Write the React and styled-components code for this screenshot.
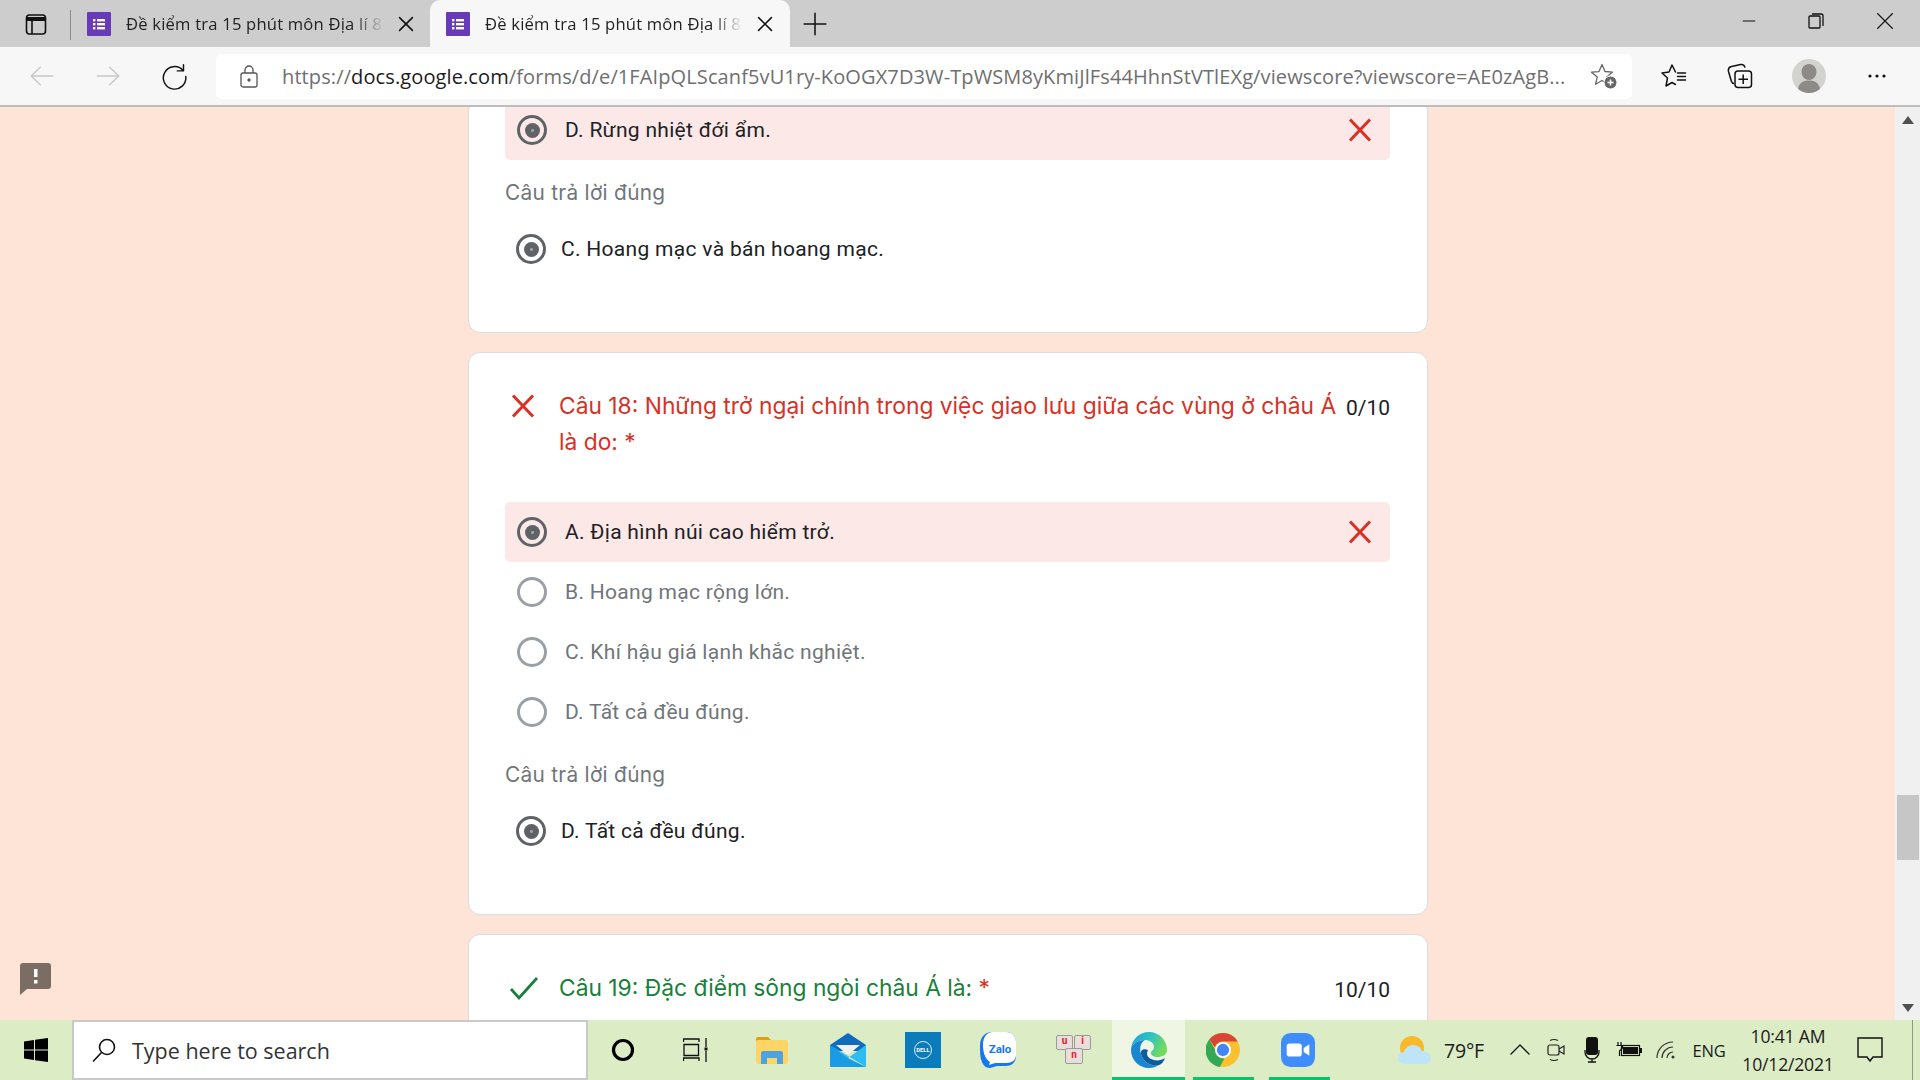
import React from 'react'
import styled, { createGlobalStyle } from 'styled-components'

const GlobalStyle = createGlobalStyle`
  html, body { margin: 0; padding: 0; width: 1920px; height: 1080px; overflow: hidden; }
  * { box-sizing: border-box; }
`

const Screen = styled.div`
  width: 1920px;
  height: 1080px;
  display: flex;
  flex-direction: column;
  font-family: 'Open Sans', 'Noto Sans', sans-serif;
  overflow: hidden;
`

/* browser chrome */
const TabStrip = styled.div`
  height: 47px;
  background: #cdcdcd;
  display: flex;
  align-items: stretch;
  flex-shrink: 0;
`
const PanelSlot = styled.div`
  width: 71px;
  display: flex;
  align-items: center;
  justify-content: center;
  position: relative;
  &::after {
    content: '';
    position: absolute;
    right: 0;
    top: 10px;
    bottom: 7px;
    width: 1px;
    background: #8c8c8c;
  }
`
const Tab = styled.div`
  width: ${(p) => (p.$active ? 360 : 359)}px;
  display: flex;
  align-items: center;
  padding-left: 16px;
  background: ${(p) => (p.$active ? '#f7f7f7' : 'transparent')};
  border-radius: 10px 10px 0 0;
  flex-shrink: 0;
`
const TabTitle = styled.div`
  width: 258px;
  margin-left: 15px;
  font-size: 16.6px;
  letter-spacing: 0.2px;
  white-space: nowrap;
  overflow: hidden;
  color: #222;
  mask-image: linear-gradient(to right, #000 88%, transparent 100%);
`
const TabClose = styled.div`
  margin-left: 11px;
  display: flex;
`
const NewTab = styled.div`
  width: 50px;
  display: flex;
  align-items: center;
  justify-content: center;
`
const WindowControls = styled.div`
  margin-left: auto;
  display: flex;
  height: 42px;
`
const WinButton = styled.div`
  width: ${(p) => p.$w}px;
  display: flex;
  align-items: center;
  justify-content: center;
`
const Toolbar = styled.div`
  height: 60px;
  background: #f7f7f7;
  border-bottom: 2px solid #bdbdbd;
  display: flex;
  align-items: center;
  padding-left: 9px;
  flex-shrink: 0;
`
const ToolSlot = styled.div`
  width: ${(p) => p.$w || 66}px;
  display: flex;
  align-items: center;
  justify-content: center;
  flex-shrink: 0;
`
const AddressBar = styled.div`
  width: 1416px;
  height: 45px;
  margin: 0 9px;
  background: #fff;
  border-radius: 6px;
  display: flex;
  align-items: center;
  padding-left: 24px;
  flex-shrink: 0;
`
const Url = styled.div`
  margin-left: 24px;
  width: 1286px;
  font-size: 20px;
  letter-spacing: 0.11px;
  color: #6f6f6f;
  white-space: nowrap;
  overflow: hidden;
  b { font-weight: 400; color: #1c1c1c; }
`
const StarAdd = styled.div`
  margin-left: 22px;
  display: flex;
`

/* page */
const Main = styled.div`
  flex: 1;
  min-height: 0;
  display: flex;
  background: #fee4d6;
  overflow: hidden;
  position: relative;
`
const Page = styled.div`
  flex: 1;
  min-width: 0;
  display: flex;
  flex-direction: column;
  align-items: center;
  gap: 19px;
  padding-left: 1px;
  overflow: hidden;
`
const Card = styled.section`
  width: 960px;
  flex-shrink: 0;
  background: #fff;
  border: 1px solid #dadce0;
  border-radius: 12px;
  padding: ${(p) => (p.$clipped ? 0 : 35)}px 37px 53px 36px;
  margin-top: ${(p) => (p.$clipped ? -8 : 0)}px;
  font-family: Roboto, sans-serif;
`
const Head = styled.div`
  display: flex;
  align-items: flex-start;
  margin-bottom: 42px;
`
const HeadIcon = styled.div`
  width: 54px;
  height: 36px;
  display: flex;
  align-items: center;
  padding-left: 3px;
  flex-shrink: 0;
`
const Title = styled.h2`
  flex: 1;
  margin: 0;
  font-family: Inter, sans-serif;
  font-weight: 400;
  font-size: 22.8px;
  line-height: 36px;
  letter-spacing: 0;
  color: ${(p) => (p.$ok ? '#188038' : '#d93025')};
  span { color: #d93025; }
`
const Score = styled.div`
  margin-left: 4px;
  font-size: 21px;
  line-height: 40px;
  color: #202124;
  white-space: nowrap;
`
const Option = styled.div`
  height: 60px;
  display: flex;
  align-items: center;
  padding: 0 12px;
  border-radius: 5px;
  background: ${(p) => (p.$wrong ? '#fce8e6' : 'transparent')};
`
const OptionText = styled.div`
  margin-left: 18px;
  flex: 1;
  font-size: 21px;
  letter-spacing: 0.3px;
  color: ${(p) => (p.$muted ? '#70757a' : '#202124')};
`
const WrongMark = styled.div`
  display: flex;
  margin-right: 3px;
`
const Ring = styled.div`
  width: 30px;
  height: 30px;
  border-radius: 50%;
  border: 3px solid ${(p) => (p.$on ? '#5f6368' : '#9aa0a6')};
  display: flex;
  align-items: center;
  justify-content: center;
  flex-shrink: 0;
  &::after {
    content: '';
    width: 15px;
    height: 15px;
    border-radius: 50%;
    background: ${(p) => (p.$on ? 'radial-gradient(#a0a4a8 1px, #5f6368 2px)' : 'transparent')};
  }
`
const AnswerLabel = styled.div`
  margin-top: 21px;
  font-family: Inter, sans-serif;
  font-size: 20.8px;
  line-height: 24px;
  letter-spacing: 0.3px;
  color: #70757a;
`
const AnswerRow = styled.div`
  height: 60px;
  margin-top: 14px;
  padding-left: 11px;
  display: flex;
  align-items: center;
`
const AnswerText = styled.div`
  margin-left: 15px;
  font-size: 21px;
  letter-spacing: 0.3px;
  color: #202124;
`
const Feedback = styled.div`
  position: absolute;
  left: 20px;
  top: 856px;
  display: flex;
`
const ScrollBar = styled.div`
  width: 25px;
  flex-shrink: 0;
  background: #f0f0f0;
  display: flex;
  flex-direction: column;
  align-items: center;
  justify-content: space-between;
  padding: 9px 0 8px;
  position: relative;
`
const Thumb = styled.div`
  position: absolute;
  top: 688px;
  left: 2px;
  right: 1px;
  height: 65px;
  background: #c6c6c6;
`

/* taskbar */
const Taskbar = styled.div`
  height: 60px;
  background: #dcecc5;
  display: flex;
  align-items: stretch;
  flex-shrink: 0;
`
const TaskSlot = styled.div`
  width: ${(p) => p.$w || 76}px;
  flex-shrink: 0;
  display: flex;
  align-items: center;
  justify-content: center;
  position: relative;
  padding-right: ${(p) => p.$shift || 0}px;
  background: ${(p) => (p.$active ? '#eff6e4' : 'transparent')};
  ${(p) =>
    p.$open &&
    `&::after {
      content: '';
      position: absolute;
      bottom: 0;
      height: 3px;
      left: ${p.$active ? 0 : 8}px;
      right: ${p.$active ? 0 : 7}px;
      background: #05c46b;
    }`}
`
const SearchBox = styled.div`
  width: 516px;
  flex-shrink: 0;
  background: #fff;
  border: 2px solid #c9c9c9;
  display: flex;
  align-items: center;
  padding-left: 17px;
`
const SearchText = styled.div`
  margin-left: 15px;
  padding-top: 1px;
  font-size: 21.5px;
  color: #333;
`
const Tray = styled.div`
  margin-left: auto;
  display: flex;
  align-items: stretch;
`
const TrayText = styled.div`
  font-size: ${(p) => p.$size || 16}px;
  letter-spacing: -0.2px;
  color: #1b1b1b;
  white-space: nowrap;
`
const Clock = styled.div`
  display: flex;
  flex-direction: column;
  align-items: center;
  gap: 6px;
  font-size: 17.6px;
  line-height: 22px;
  letter-spacing: -0.2px;
  color: #1b1b1b;
`
const DesktopEdge = styled.div`
  width: 22px;
  position: relative;
  &::after {
    content: '';
    position: absolute;
    right: 7px;
    top: 0;
    bottom: 0;
    width: 1px;
    background: #8e9a80;
  }
`

const Line = ({ size = 24, d, color = '#111', w = 1.5 }) => (
  <svg width={size} height={size} viewBox="0 0 24 24" fill="none" stroke={color} strokeWidth={w} strokeLinecap="round" strokeLinejoin="round">
    <path d={d} />
  </svg>
)

const FormsIcon = () => (
  <svg width="24" height="24" viewBox="0 0 24 24">
    <rect width="24" height="24" rx="1" fill="#673ab7" />
    <g fill="#fff">
      <rect x="6" y="7" width="2.4" height="2.4" />
      <rect x="10" y="7" width="8" height="2.4" />
      <rect x="6" y="11" width="2.4" height="2.4" />
      <rect x="10" y="11" width="8" height="2.4" />
      <rect x="6" y="15" width="2.4" height="2.4" />
      <rect x="10" y="15" width="8" height="2.4" />
    </g>
  </svg>
)

const PanelIcon = () => (
  <svg width="24" height="24" viewBox="0 0 24 24" fill="none" stroke="#111" strokeWidth="1.6">
    <rect x="2.5" y="3" width="19" height="19" rx="3" />
    <path d="M2.5 7h19" strokeWidth="4" />
    <path d="M8 9v13" />
  </svg>
)

const WrongIcon = ({ size = 30 }) => (
  <svg width={size} height={size} viewBox="0 0 30 30" fill="none" stroke="#d93025" strokeWidth="3">
    <path d="M5 4.5 25 25.5M25 4.5 5 25.5" />
  </svg>
)

const CheckIcon = () => (
  <svg width="32" height="32" viewBox="0 0 32 32" fill="none" stroke="#188038" strokeWidth="2.8">
    <path d="M3 17l8 9L29 6" />
  </svg>
)

const LockIcon = () => (
  <svg width="18" height="23" viewBox="0 0 18 23" fill="none" stroke="#555" strokeWidth="1.3">
    <rect x="1" y="8" width="16" height="14" rx="2" />
    <path d="M5 8V5a4 4 0 0 1 8 0v3" />
    <circle cx="9" cy="15" r="1" fill="#555" />
  </svg>
)

const StarPlusIcon = () => (
  <svg width="28" height="28" viewBox="0 0 28 28" fill="none" stroke="#666" strokeWidth="1.3" strokeLinejoin="round">
    <path d="M12 2.500l3 7 7.500.6-5.700 4.900 1.700 7.200L12 18.500l-6.500 3.800 1.700-7.200-5.700-4.900 7.500-.6z" />
    <circle cx="20.500" cy="20.500" r="6.500" fill="#666" stroke="#fff" strokeWidth="1" />
    <path d="M20.500 17.500v6M17.500 20.500h6" stroke="#fff" strokeWidth="1.600" />
  </svg>
)

const FavIcon = () => (
  <svg width="26" height="26" viewBox="0 0 26 26" fill="none" stroke="#111" strokeWidth="1.500" strokeLinejoin="round" strokeLinecap="round">
    <path d="M14.500 9 11 2 8 9 1 10l5.500 5L5 23l6-3.500 3.500 2" />
    <path d="M16.500 10h8M16.500 13.500h8M16.500 17h8" />
  </svg>
)

const CollectionIcon = () => (
  <svg width="26" height="26" viewBox="0 0 26 26" fill="none" stroke="#111" strokeWidth="1.500" strokeLinejoin="round">
    <path d="M7 20.500c-1.500 0-2.200-1-2.600-2.200L1.500 8.500C1 6 2 4 4.500 3.400l9-1.800c2.500-.4 4 .8 4.500 3" />
    <rect x="8" y="8" width="16.500" height="16.500" rx="3" />
    <path d="M16.200 11.500v9.500M11.500 16.200h9.500" />
  </svg>
)

const Avatar = () => (
  <svg width="34" height="34" viewBox="0 0 34 34">
    <circle cx="17" cy="17" r="17" fill="#d2d2cf" />
    <ellipse cx="17" cy="13" rx="7.500" ry="8" fill="#8d8b88" />
    <path d="M6 30c1-6 5-8.500 11-8.500S27 24 28 30a17 17 0 0 1-22 0z" fill="#8d8b88" />
  </svg>
)

const MoreIcon = () => (
  <svg width="22" height="6" viewBox="0 0 22 6" fill="#111">
    <circle cx="4" cy="3" r="1.600" />
    <circle cx="11" cy="3" r="1.600" />
    <circle cx="18" cy="3" r="1.600" />
  </svg>
)

const FeedbackIcon = () => (
  <svg width="31" height="32" viewBox="0 0 31 32">
    <path d="M3 0h25a3 3 0 0 1 3 3v20a3 3 0 0 1-3 3H7l-7 6V3a3 3 0 0 1 3-3z" fill="#7b6c64" />
    <rect x="14" y="6" width="3.500" height="8" fill="#fff" />
    <rect x="14" y="17" width="3.500" height="3.500" fill="#fff" />
  </svg>
)

const WindowsLogo = () => (
  <svg width="24" height="24" viewBox="0 0 24 24" fill="#000">
    <path d="M0 3.400 10 2v9.500H0zM11 1.800 24 0v11.500H11zM0 12.500h10V22L0 20.600zM11 12.500h13V24l-13-1.800z" />
  </svg>
)

const SearchIcon = () => (
  <svg width="26" height="26" viewBox="0 0 26 26" fill="none" stroke="#111" strokeWidth="1.600">
    <circle cx="16" cy="10" r="7.500" />
    <path d="M10.500 15.500 2 24.500" />
  </svg>
)

const TaskViewIcon = () => (
  <svg width="26" height="24" viewBox="0 0 26 24" fill="none" stroke="#111" strokeWidth="1.300">
    <path d="M0.500 4V1h15.500v3M1 6.500h14.500v11H1zM0.500 23v-3h15.500v3M23 0v9M23 13v11" />
    <rect x="21.500" y="9.500" width="3" height="3" fill="#111" stroke="none" />
  </svg>
)

const ExplorerIcon = () => (
  <svg width="32" height="28" viewBox="0 0 32 28">
    <path d="M0 3a2 2 0 0 1 2-2h10l4 4v3H0z" fill="#dea00f" />
    <rect x="0" y="4" width="32" height="24" rx="2" fill="#fdd567" />
    <path d="M5 27V16a2 2 0 0 1 2-2h18a2 2 0 0 1 2 2v11h-6v-6H11v6z" fill="#4da3e0" transform="translate(0 1)" />
  </svg>
)

const MailIcon = () => (
  <svg width="36" height="34" viewBox="0 0 36 34">
    <path d="M0 12 18 0l18 12v6H0z" fill="#0f6cbd" />
    <path d="M6 12h24l-12 10z" fill="#f1f1f1" />
    <path d="M0 12l18 13 18-13v22z" fill="#2dbdf2" />
    <path d="M0 12l18 13 18 9H1a1 1 0 0 1-1-1z" fill="#1a9be6" />
  </svg>
)

const DellIcon = () => (
  <svg width="36" height="36" viewBox="0 0 36 36">
    <rect width="36" height="36" fill="#0a7cbb" />
    <circle cx="18" cy="18" r="8.500" fill="none" stroke="#dff0fa" strokeWidth="1" />
    <text x="18" y="20.300" textAnchor="middle" fontFamily="Roboto, sans-serif" fontWeight="700" fontSize="5.800" fill="#fff">DELL</text>
  </svg>
)

const ZaloIcon = () => (
  <svg width="36" height="36" viewBox="0 0 36 36">
    <path d="M12 0h14c6 0 10 4 10 10v14c0 6-4 10-10 10H17l-7 2c-4 0-7-3-8-6C0 26 0 20 0 14 0 5 5 0 12 0z" fill="#1677f0" />
    <path d="M13 0h13c6 0 10 4 10 10v13c0 5-4 8-10 8H15l-6 2 1-3C5 27 3 20 3 13 3 5 7 0 13 0z" fill="#fff" />
    <text x="20" y="21" textAnchor="middle" fontFamily="Roboto, sans-serif" fontWeight="700" fontSize="11.500" fill="#1677f0">Zalo</text>
  </svg>
)

const UniKeyIcon = () => (
  <svg width="36" height="30" viewBox="0 0 36 30">
    <g fill="#e2dfdd" stroke="#9e9a98">
      <rect x="0.500" y="0.500" width="16" height="14" rx="1.500" />
      <rect x="18.500" y="0.500" width="16" height="14" rx="1.500" />
      <rect x="9.500" y="13.500" width="17" height="15" rx="1.500" />
    </g>
    <g fill="#f4dcdc">
      <rect x="3" y="2" width="11" height="8" />
      <rect x="21" y="2" width="11" height="8" />
      <rect x="12" y="15" width="12" height="9" />
    </g>
    <g fill="#e0202a" fontFamily="Roboto, sans-serif" fontWeight="700" fontSize="10" textAnchor="middle">
      <text x="8.500" y="9">u</text>
      <text x="26.500" y="9">i</text>
      <text x="18" y="23">n</text>
    </g>
  </svg>
)

const EdgeIcon = () => (
  <svg width="36" height="36" viewBox="0 0 36 36">
    <defs>
      <linearGradient id="edgeTop" x1="0" y1="0" x2="1" y2="0.400">
        <stop offset="0" stopColor="#1ba3d9" />
        <stop offset="0.550" stopColor="#2fc3c4" />
        <stop offset="1" stopColor="#6fdc5c" />
      </linearGradient>
    </defs>
    <path d="M0 18C0 8 8 0 18 0c10 0 18 8 18 18 0 5-5 7-9 7-5 0-7-2-7-4 0-2 3-3 3-6 0-4-4-7-9-7C6 8 0 13 0 18z" fill="url(#edgeTop)" />
    <path d="M0 18c0-5 6-10 14-10-4 2-6 8-4 14 2 8 10 13 18 11-3 2-6 3-10 3C8 36 0 28 0 18z" fill="#1a86d0" />
    <path d="M10 22c2 8 10 13 18 11 3-1 5-4 6-7-4 3-10 3-14 1-4-2-5-5-3-9-4-2-8 0-7 4z" fill="#0d5ba0" />
  </svg>
)

const ChromeIcon = () => (
  <svg width="34" height="34" viewBox="0 0 36 36">
    <circle cx="18" cy="18" r="18" fill="#fbc02d" />
    <path d="M18 0a18 18 0 0 1 15.600 9H18a9 9 0 0 0-8.500 6L3.500 7A18 18 0 0 1 18 0z" fill="#dc4437" />
    <path d="M3.500 7l7 12a8 8 0 0 0 9 8l-5 9A18 18 0 0 1 3.500 7z" fill="#34a853" />
    <circle cx="18" cy="18" r="8.500" fill="#fff" />
    <circle cx="18" cy="18" r="6.500" fill="#4285f4" />
  </svg>
)

const ZoomIcon = () => (
  <svg width="34" height="34" viewBox="0 0 36 36">
    <rect width="36" height="36" rx="10" fill="#3f8cff" />
    <rect x="6" y="11" width="16" height="14" rx="3" fill="#fff" />
    <path d="M24 16l6-4v12l-6-4z" fill="#fff" />
  </svg>
)

const WeatherIcon = () => (
  <svg width="33" height="28" viewBox="0 0 33 28">
    <circle cx="14" cy="12" r="12" fill="#fbb829" />
    <path d="M7 28c-4 0-7-3-7-6s2-6 6-6c1-4 5-7 9-7 5 0 8 3 9 6 5 0 9 3 9 7s-3 6-7 6z" fill="#bfe4f8" />
  </svg>
)

const MeetIcon = () => (
  <svg width="18" height="24" viewBox="0 0 18 24" fill="none" stroke="#222" strokeWidth="1.200">
    <rect x="1" y="7" width="11" height="10" rx="2" />
    <path d="M12 11l5-3v8l-5-3M3 2.500a9 9 0 0 1 8 0M3 21.500a9 9 0 0 0 8 0" />
  </svg>
)

const MicIcon = () => (
  <svg width="16" height="26" viewBox="0 0 16 26">
    <rect x="2" y="0" width="12" height="18" rx="3" fill="#111" />
    <path d="M1 13v2a7 7 0 0 0 14 0v-2M8 22v3M4 25h8" fill="none" stroke="#111" strokeWidth="1.300" />
  </svg>
)

const BatteryIcon = () => (
  <svg width="26" height="16" viewBox="0 0 26 16" fill="none" stroke="#111" strokeWidth="1.200">
    <rect x="5.500" y="3.500" width="18" height="10" />
    <rect x="7" y="5" width="15" height="7" fill="#111" stroke="none" />
    <rect x="24" y="6" width="2" height="5" fill="#111" stroke="none" />
    <path d="M2 0v3M5 0v3M0.500 3.500h6v2.500L3.500 9v5" />
  </svg>
)

const WifiIcon = () => (
  <svg width="20" height="20" viewBox="0 0 20 20" fill="none" stroke="#333" strokeWidth="1.200">
    <path d="M11 18a6 6 0 0 1 6-6M6 18a11 11 0 0 1 11-11M1 18A16 16 0 0 1 17 2" />
    <circle cx="17" cy="17" r="1.500" fill="#333" stroke="none" />
  </svg>
)

const NoticeIcon = () => (
  <svg width="26" height="26" viewBox="0 0 26 26" fill="none" stroke="#111" strokeWidth="1.400">
    <path d="M1 1h24v19h-9l-3 4-3-4H1z" />
  </svg>
)

const OptionRow = ({ text, selected }) => (
  <Option $wrong={selected}>
    <Ring $on={selected} />
    <OptionText $muted={!selected}>{text}</OptionText>
    {selected && (
      <WrongMark>
        <WrongIcon />
      </WrongMark>
    )}
  </Option>
)

const Answer = ({ text }) => (
  <>
    <AnswerLabel>Câu trả lời đúng</AnswerLabel>
    <AnswerRow>
      <Ring $on />
      <AnswerText>{text}</AnswerText>
    </AnswerRow>
  </>
)

const tabName = 'Đề kiểm tra 15 phút môn Địa lí 8'
const closeX = 'M5 5l14 14M19 5 5 19'

export default function App() {
  return (
    <Screen>
      <GlobalStyle />
      <TabStrip>
        <PanelSlot>
          <PanelIcon />
        </PanelSlot>
        <Tab>
          <FormsIcon />
          <TabTitle>{tabName}</TabTitle>
          <TabClose>
            <Line d={closeX} w={1.7} size={22} />
          </TabClose>
        </Tab>
        <Tab $active>
          <FormsIcon />
          <TabTitle>{tabName}</TabTitle>
          <TabClose>
            <Line d={closeX} w={1.7} size={22} />
          </TabClose>
        </Tab>
        <NewTab>
          <Line d="M12 2v20M2 12h20" w={1.4} size={26} />
        </NewTab>
        <WindowControls>
          <WinButton $w={67}>
            <Line d="M5 12h14" w={1.2} size={20} />
          </WinButton>
          <WinButton $w={68}>
            <svg width="20" height="20" viewBox="0 0 20 20" fill="none" stroke="#111" strokeWidth="1.300">
              <rect x="3" y="5" width="11" height="12" rx="1" />
              <path d="M6 3h9a2 2 0 0 1 2 2v10" />
            </svg>
          </WinButton>
          <WinButton $w={70}>
            <Line d="M4.500 4.500l15 15M19.500 4.500l-15 15" w={1.1} size={24} />
          </WinButton>
        </WindowControls>
      </TabStrip>

      <Toolbar>
        <ToolSlot>
          <Line d="M22 12H2M10.500 4 2 12l8.500 8" color="#c8c8c8" size={26} w={1.3} />
        </ToolSlot>
        <ToolSlot>
          <Line d="M2 12h20M13.500 4l8.500 8-8.500 8" color="#c8c8c8" size={26} w={1.3} />
        </ToolSlot>
        <ToolSlot>
          <Line d="M19.500 6.500A10 10 0 1 0 22 12M20 1.500v5.500h-5.500" size={27} w={1.3} />
        </ToolSlot>
        <AddressBar>
          <LockIcon />
          <Url>
            https://<b>docs.google.com</b>/forms/d/e/1FAIpQLScanf5vU1ry-KoOGX7D3W-TpWSM8yKmiJlFs44HhnStVTlEXg/viewscore?viewscore=AE0zAgB...
          </Url>
          <StarAdd>
            <StarPlusIcon />
          </StarAdd>
        </AddressBar>
        <ToolSlot>
          <FavIcon />
        </ToolSlot>
        <ToolSlot>
          <CollectionIcon />
        </ToolSlot>
        <ToolSlot $w={72}>
          <Avatar />
        </ToolSlot>
        <ToolSlot $w={64}>
          <MoreIcon />
        </ToolSlot>
      </Toolbar>

      <Main>
        <Page>
          <Card $clipped>
            <OptionRow text="D. Rừng nhiệt đới ẩm." selected />
            <Answer text="C. Hoang mạc và bán hoang mạc." />
          </Card>
          <Card>
            <Head>
              <HeadIcon>
                <WrongIcon />
              </HeadIcon>
              <Title>
                Câu 18: Những trở ngại chính trong việc giao lưu giữa các vùng ở châu Á là do: <span>*</span>
              </Title>
              <Score>0/10</Score>
            </Head>
            <OptionRow text="A. Địa hình núi cao hiểm trở." selected />
            <OptionRow text="B. Hoang mạc rộng lớn." />
            <OptionRow text="C. Khí hậu giá lạnh khắc nghiệt." />
            <OptionRow text="D. Tất cả đều đúng." />
            <Answer text="D. Tất cả đều đúng." />
          </Card>
          <Card>
            <Head>
              <HeadIcon>
                <CheckIcon />
              </HeadIcon>
              <Title $ok>
                Câu 19: Đặc điểm sông ngòi châu Á là: <span>*</span>
              </Title>
              <Score>10/10</Score>
            </Head>
          </Card>
        </Page>
        <Feedback>
          <FeedbackIcon />
        </Feedback>
        <ScrollBar>
          <svg width="12" height="8" viewBox="0 0 12 8"><path d="M6 0l6 8H0z" fill="#505050" /></svg>
          <Thumb />
          <svg width="12" height="8" viewBox="0 0 12 8"><path d="M0 0h12L6 8z" fill="#505050" /></svg>
        </ScrollBar>
      </Main>

      <Taskbar>
        <TaskSlot $w={72}>
          <WindowsLogo />
        </TaskSlot>
        <SearchBox>
          <SearchIcon />
          <SearchText>Type here to search</SearchText>
        </SearchBox>
        <TaskSlot $w={70}>
          <svg width="24" height="24" viewBox="0 0 24 24" fill="none" stroke="#000" strokeWidth="3.200">
            <circle cx="12" cy="12" r="9.500" />
          </svg>
        </TaskSlot>
        <TaskSlot><TaskViewIcon /></TaskSlot>
        <TaskSlot><ExplorerIcon /></TaskSlot>
        <TaskSlot><MailIcon /></TaskSlot>
        <TaskSlot $w={74}><DellIcon /></TaskSlot>
        <TaskSlot><ZaloIcon /></TaskSlot>
        <TaskSlot><UniKeyIcon /></TaskSlot>
        <TaskSlot $w={73} $active $open><EdgeIcon /></TaskSlot>
        <TaskSlot $open><ChromeIcon /></TaskSlot>
        <TaskSlot $open $shift={2}><ZoomIcon /></TaskSlot>
        <Tray>
          <TaskSlot $w={44}><WeatherIcon /></TaskSlot>
          <TaskSlot $w={66} $shift={10}>
            <TrayText $size={19.5}>79°F</TrayText>
          </TaskSlot>
          <TaskSlot $w={36}>
            <Line d="M3 16l9-9 9 9" w={1.3} size={24} />
          </TaskSlot>
          <TaskSlot $w={36}><MeetIcon /></TaskSlot>
          <TaskSlot $w={36}><MicIcon /></TaskSlot>
          <TaskSlot $w={38}><BatteryIcon /></TaskSlot>
          <TaskSlot $w={36}><WifiIcon /></TaskSlot>
          <TaskSlot $w={50}>
            <TrayText $size={16.5}>ENG</TrayText>
          </TaskSlot>
          <TaskSlot $w={108}>
            <Clock>
              <div>10:41 AM</div>
              <div>10/12/2021</div>
            </Clock>
          </TaskSlot>
          <TaskSlot $w={56}><NoticeIcon /></TaskSlot>
          <DesktopEdge />
        </Tray>
      </Taskbar>
    </Screen>
  )
}
